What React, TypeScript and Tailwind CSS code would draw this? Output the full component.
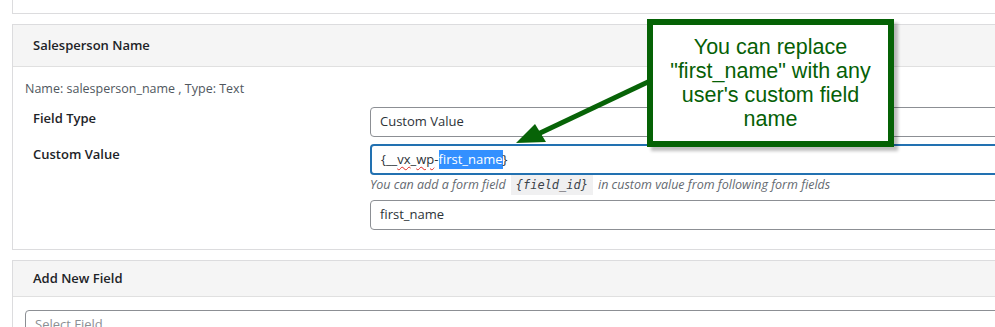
import React from "react";

export default function App() {
  return (
    <div className="relative w-[995px] h-[327px] overflow-hidden bg-white text-[#3c434a] [font-family:'Open_Sans','Noto_Sans',sans-serif]">
      {/* top card remnant */}
      <div className="ml-[12px] mr-[-20px] h-[14px] border-l border-b border-[#dcdcde] bg-white" />

      {/* Salesperson card */}
      <div className="mt-[10px] ml-[12px] mr-[-20px] border border-[#dcdcde] bg-white">
        <div className="h-[42px] flex items-center pl-[20px] bg-[#f5f5f5] border-b border-[#e0e0e0]">
          <span className="text-[13px] font-semibold text-[#1d2327]">Salesperson Name</span>
        </div>
        <div className="px-[12px] pt-[13px] pb-[19px]">
          <div className="text-[12.5px] leading-[18px] text-[#50575e]">Name: salesperson_name , Type: Text</div>
          <div className="flex mt-[9px]">
            <div className="w-[345px] pl-[8px] pt-[2px] text-[13px] font-semibold text-[#1d2327]">Field Type</div>
            <div className="flex-1">
              <div className="h-[30px] flex items-center pl-[9px] border border-[#8c8f94] rounded-[4px] text-[13px] text-[#2c3338]">
                Custom Value
              </div>
            </div>
          </div>
          <div className="flex mt-[7px]">
            <div className="w-[345px] pl-[8px] pt-[1px] text-[13px] font-semibold text-[#1d2327]">Custom Value</div>
            <div className="flex-1">
              <div className="h-[31px] flex items-center pl-[9px] border-2 border-[#2271b1] rounded-[4px] text-[13px] text-[#2c3338]">
                <span>{"{__"}</span>
                <span className="underline decoration-wavy decoration-[#e0261f] decoration-1 underline-offset-2">vx</span>
                <span>_</span>
                <span className="underline decoration-wavy decoration-[#e0261f] decoration-1 underline-offset-2">wp</span>
                <span>-</span>
                <span className="bg-[#3390ff] text-white">first_name</span>
                <span>{"}"}</span>
              </div>
              <div className="mt-[0px] text-[12.5px] italic text-[#646970] leading-[20px] flex items-center">
                <span>You can add a form field</span>
                <code className="mx-[5px] px-[5px] bg-[#f0f0f1] text-[12px] text-[#3c434a] [font-family:'DejaVu_Sans_Mono',monospace]">{"{field_id}"}</code>
                <span>in custom value from following form fields</span>
              </div>
              <div className="mt-[5px] h-[30px] flex items-center pl-[9px] border border-[#8c8f94] rounded-[4px] text-[13px] text-[#2c3338]">
                first_name
              </div>
            </div>
          </div>
        </div>
      </div>

      {/* Add new field card */}
      <div className="mt-[10px] ml-[12px] mr-[-20px] border border-[#dcdcde] bg-white">
        <div className="h-[36px] flex items-center pl-[20px] bg-[#f5f5f5] border-b border-[#e0e0e0]">
          <span className="text-[13px] font-semibold text-[#1d2327]">Add New Field</span>
        </div>
        <div className="px-[12px] pt-[13px]">
          <div className="h-[30px] flex items-center pl-[9px] border border-[#8c8f94] rounded-[4px] text-[13px] text-[#8c8f94]">
            Select Field
          </div>
        </div>
      </div>

      {/* arrow */}
      <svg className="absolute left-0 top-0" width="995" height="327" viewBox="0 0 995 327">
        <line x1="650" y1="81" x2="538" y2="134" stroke="#076307" strokeWidth="5" />
        <polygon points="516,143 535,124 546,142" fill="#076307" />
      </svg>

      {/* callout */}
      <div className="absolute left-[647px] top-[19px] w-[247px] h-[128px] border-[6px] border-[#056205] bg-white shadow-[4px_4px_3px_rgba(0,0,0,0.25)] flex flex-col items-center justify-center text-center text-[21.5px] leading-[24px] text-[#065f06] [font-family:'Liberation_Sans',Arial,sans-serif]">
        <div>You can replace</div>
        <div>"first_name" with any</div>
        <div>user's custom field</div>
        <div>name</div>
      </div>
    </div>
  );
}
